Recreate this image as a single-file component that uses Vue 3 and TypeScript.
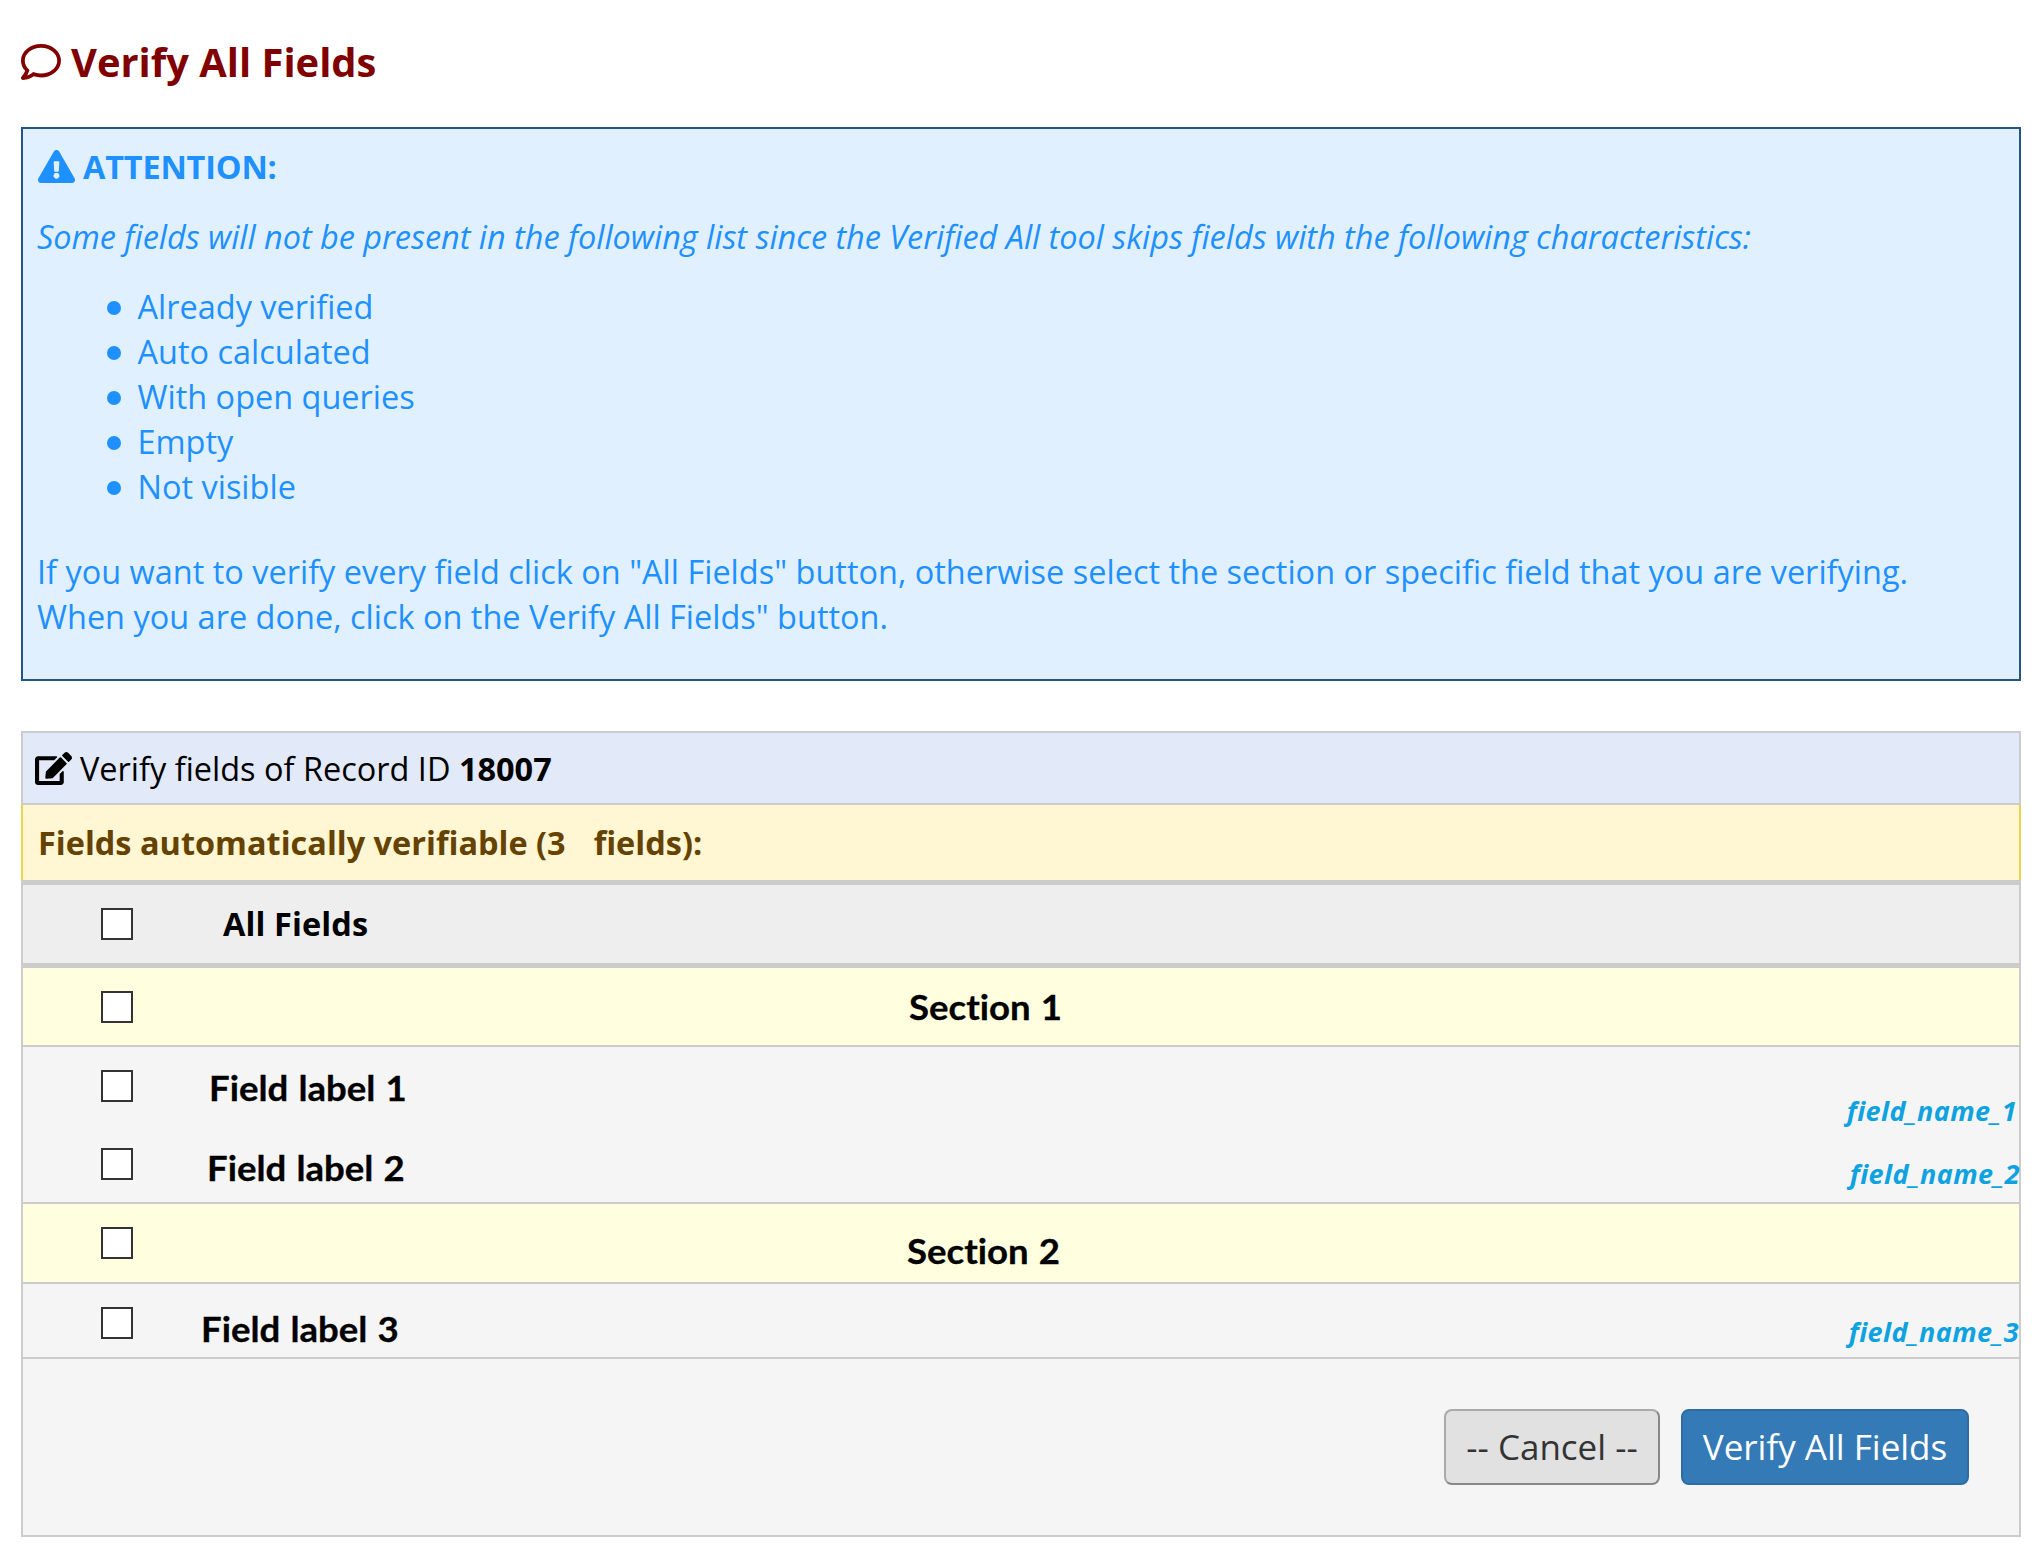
<script setup lang="ts">
import { ref } from 'vue'

interface Row {
  key: string
  kind: 'section' | 'field'
  label: string
  name?: string
}

const recordId = '18007'
const fieldCount = 3
const skipped: string[] = ['Already verified', 'Auto calculated', 'With open queries', 'Empty', 'Not visible']
const rows: Row[] = [
  { key: 's1', kind: 'section', label: 'Section 1' },
  { key: 'f1', kind: 'field', label: 'Field label 1', name: 'field_name_1' },
  { key: 'f2', kind: 'field', label: 'Field label 2', name: 'field_name_2' },
  { key: 's2', kind: 'section', label: 'Section 2' },
  { key: 'f3', kind: 'field', label: 'Field label 3', name: 'field_name_3' },
]
const checked = ref<string[]>([])
</script>

<template>
  <main class="page">
    <h1 class="title">
      <svg class="icon-comment" viewBox="0 32 512 448" preserveAspectRatio="none"><path fill="currentColor" d="M256 32C114.6 32 0 125.1 0 240c0 47.6 19.9 91.2 52.9 126.3C38 405.7 7 439.1 6.5 439.5c-6.6 7-8.4 17.2-4.6 26S14.4 480 24 480c61.500 0 110-25.700 139.100-46.300C192 442.800 223.200 448 256 448c141.400 0 256-93.100 256-208S397.400 32 256 32zm0 368c-26.700 0-53.100-4.100-78.400-12.100l-22.700-7.200-19.500 13.800c-14.300 10.100-33.900 21.400-57.500 29 7.300-12.100 14.400-25.700 19.900-40.200l10.600-28.100-20.600-21.800C69.700 314.100 48 282.200 48 240c0-88.200 93.300-160 208-160s208 71.800 208 160-93.300 160-208 160z" /></svg>
      <span class="title-text">Verify All Fields</span>
    </h1>

    <section class="notice">
      <div class="notice-head">
        <svg class="icon-warn" viewBox="0 0 576 512" preserveAspectRatio="none"><path fill="currentColor" d="M569.517 440.013C587.975 472.007 564.806 512 527.94 512H48.054c-36.937 0-59.999-40.055-41.577-71.987L246.423 23.985c18.467-32.009 64.720-31.951 83.154 0l239.940 416.028zM288 354c-25.405 0-46 20.595-46 46s20.595 46 46 46 46-20.595 46-46-20.595-46-46-46zm-43.673-165.346l7.418 136c.347 6.364 5.609 11.346 11.982 11.346h48.546c6.373 0 11.635-4.982 11.982-11.346l7.418-136c.375-6.874-5.098-12.654-11.982-12.654h-63.383c-6.884 0-12.356 5.780-11.981 12.654z" /></svg>
        <b class="attention">ATTENTION:</b>
      </div>
      <p class="intro">Some fields will not be present in the following list since the Verified All tool skips fields with the following characteristics:</p>
      <ul class="skipped">
        <li v-for="s in skipped" :key="s">{{ s }}</li>
      </ul>
      <p class="help">If you want to verify every field click on "All Fields" button, otherwise select the section or specific field that you are verifying.<br>When you are done, click on the Verify All Fields" button.</p>
    </section>

    <section class="panel">
      <div class="panel-head">
        <svg class="icon-edit" viewBox="0 0 576 512" preserveAspectRatio="none"><path fill="currentColor" d="M402.600 83.200l90.200 90.200c3.800 3.800 3.800 10 0 13.800L274.400 405.600l-92.800 10.300c-12.400 1.400-22.900-9.100-21.500-21.500l10.300-92.800L388.800 83.200c3.800-3.800 10-3.800 13.800 0zm162-22.900l-48.800-48.800c-15.200-15.200-39.900-15.200-55.200 0l-35.400 35.400c-3.800 3.800-3.800 10 0 13.800l90.200 90.200c3.800 3.800 10 3.800 13.800 0l35.400-35.400c15.200-15.300 15.200-40 0-55.200zM384 346.200V448H64V128h229.800c3.200 0 6.200-1.300 8.500-3.500l40-40c7.600-7.600 2.200-20.500-8.500-20.500H48C21.500 64 0 85.500 0 112v352c0 26.500 21.500 48 48 48h352c26.500 0 48-21.500 48-48V306.200c0-10.700-12.900-16-20.500-8.500l-40 40c-2.200 2.300-3.500 5.300-3.500 8.500z" /></svg>
        <span class="record">Verify fields of Record ID <b>{{ recordId }}</b></span>
      </div>
      <div class="summary"><span>Fields automatically verifiable ({{ fieldCount }}</span><span>fields):</span></div>
      <div class="row all">
        <input v-model="checked" type="checkbox" value="all">
        <span class="label">All Fields</span>
      </div>
      <div v-for="r in rows" :key="r.key" class="row" :class="[r.kind, r.key]">
        <input v-model="checked" type="checkbox" :value="r.key">
        <span class="label">{{ r.label }}</span>
        <span v-if="r.name" class="name">{{ r.name }}</span>
      </div>
      <div class="actions">
        <button class="btn cancel" type="button">-- Cancel --</button>
        <button class="btn primary" type="button">Verify All Fields</button>
      </div>
    </section>
  </main>
</template>

<style>
body { margin: 0; background: #fff; }
</style>

<style scoped>
.page {
  box-sizing: border-box;
  width: 2036px;
  height: 1560px;
  padding: 34px 15px 0 21px;
  background: #fff;
  font-family: "Open Sans", "Noto Sans", sans-serif;
  font-size: 32.47px;
  line-height: 45px;
  overflow: hidden;
  white-space: nowrap;
}
svg { display: block; flex: none; }
.title {
  display: flex;
  align-items: flex-start;
  height: 93px;
  margin: 0;
  color: #800000;
  font-size: 39.9px;
  line-height: 56px;
  font-weight: 700;
}
.icon-comment { width: 40px; height: 36px; margin: 10px 10px 0 0; }
.notice {
  box-sizing: border-box;
  height: 554px;
  padding: 15px 14px 0;
  border: 2px solid #235684;
  background: #e0f0ff;
  color: #1e90ff;
}
.notice-head { display: flex; height: 45px; margin-bottom: 25px; }
.icon-warn { width: 37px; height: 33px; margin: 6px 8px 0 1px; }
.attention { letter-spacing: -0.2px; }
.intro, .help { margin: 0; }
.intro { font-style: italic; margin-bottom: 25px; letter-spacing: -0.035px; }
.skipped { list-style: none; margin: 0 0 40px; padding: 0 0 0 70px; }
.skipped li { display: flex; align-items: center; height: 45px; }
.skipped li::before {
  content: "";
  width: 14px;
  height: 14px;
  margin: 3px 16.5px 0 0;
  border-radius: 50%;
  background: #1e90ff;
}
.panel {
  box-sizing: border-box;
  height: 806px;
  margin-top: 50px;
  border: 2px solid #ccc;
  background: #f5f5f5;
  color: #000;
}
.panel-head {
  display: flex;
  height: 70px;
  border-bottom: 2px solid #ccc;
  background: #e2e9f8;
}
.icon-edit { width: 37px; height: 33px; margin: 19px 8px 0 12px; }
.record { padding-top: 13px; }
.summary {
  display: flex;
  gap: 28px;
  height: 75px;
  margin: 0 -2px;
  box-sizing: border-box;
  padding: 15px 15px 0;
  border: 0 solid #eed34f;
  border-width: 0 2px;
  background: #fff6d3;
  color: #664200;
  font-weight: 700;
}
.row {
  box-sizing: border-box;
  display: flex;
  align-items: flex-start;
  height: 79px;
  padding: 23px 0 0 78px;
}
.row input {
  appearance: none;
  box-sizing: border-box;
  flex: none;
  width: 32px;
  height: 32px;
  margin: 0;
  border: 2px solid #333;
  background: #fff;
}
.label { font-weight: 700; }
.all {
  height: 88px;
  border: 5px solid #ccc;
  border-width: 5px 0;
  background: #eee;
}
.all .label { margin: -7px 0 0 90px; letter-spacing: 0.1px; }
.section { background: #ffffe0; border-bottom: 2px solid #ccc; }
.section .label, .field .label {
  font-family: Lato, sans-serif;
  font-size: 34px;
  font-variant-ligatures: none;
  word-spacing: 1.2px;
  transform: scaleX(1.075);
  transform-origin: left;
  -webkit-text-stroke: 0.3px #000;
}
.section .label { margin-left: 776px; }
.s1 .label { margin-top: -7px; }
.s2 { height: 80px; }
.s2 .label { margin: 1px 0 0 774px; }
.f1 { height: 78px; }
.f1 .label { margin: -5px 0 0 76px; }
.f2 { height: 79px; border-bottom: 2px solid #ccc; }
.f2 .label { margin: -3px 0 0 74px; }
.f3 { height: 75px; border-bottom: 2px solid #ccc; }
.f3 .label { margin: -1px 0 0 68px; }
.name {
  margin: 18px 2px 0 auto;
  color: #0ea2e0;
  font-size: 27px;
  font-style: italic;
  font-weight: 700;
  letter-spacing: 0.4px;
}
.f2 .name { margin: 3px -1px 0 auto; }
.f3 .name { margin: 2px 0 0 auto; }
.actions { display: flex; justify-content: flex-end; gap: 21px; padding: 50px 50px 0 0; }
.btn {
  box-sizing: border-box;
  height: 76px;
  padding: 0;
  border: 2px solid #2e6da4;
  border-radius: 8px;
  font: 35px/48px "Open Sans", "Noto Sans", sans-serif;
}
.cancel { width: 216px; border-color: #aaa #888 #888 #aaa; background: #e1e1e1; color: #333; }
.primary { width: 288px; background: #337ab7; color: #fff; }
</style>
